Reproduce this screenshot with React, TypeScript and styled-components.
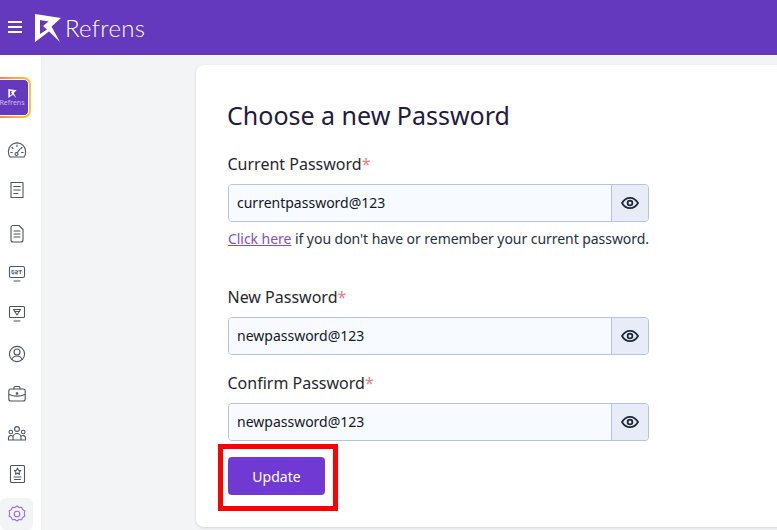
import React from 'react'
import styled, { createGlobalStyle } from 'styled-components'

const GlobalStyle = createGlobalStyle`
  html, body {
    margin: 0;
    height: 100%;
    overflow: hidden;
    font-family: "Noto Sans", "Open Sans", sans-serif;
    background: #f3f4f6;
  }
`

const Svg = ({ children }: { children: React.ReactNode }) => (
  <svg width="20" height="20" viewBox="0 0 20 20" fill="none" stroke="currentColor" strokeWidth="1.1" strokeLinecap="round" strokeLinejoin="round">
    {children}
  </svg>
)

const navItems: { icon: React.ReactNode; gap: number; active?: boolean }[] = [
  {
    gap: 20,
    icon: (
      <Svg>
        <path d="M3 17h14c1-1 1.600-3 1.600-5.500A8.600 8.600 0 0 0 1.400 11.500C1.400 14 2 16 3 17z" />
        <path d="M10 5v1.500M5 7.500l1 1M15 7.500l-1 1M3.800 12.500h1.500M14.700 12.500h1.500M10 13l3-4" />
        <circle cx="9.500" cy="14" r="1.500" />
      </Svg>
    ),
  },
  {
    gap: 24,
    icon: (
      <Svg>
        <path d="M4 2.500h12v15H4z" strokeDasharray="11 1" />
        <path d="M6.800 6.500h6.400M6.800 10h6.400M6.800 13.500h4" />
      </Svg>
    ),
  },
  {
    gap: 20,
    icon: (
      <Svg>
        <path d="M6 1.500h6l4 4V16a2 2 0 0 1-2 2H6a2 2 0 0 1-2-2V3.500a2 2 0 0 1 2-2z" />
        <path d="M7 7h6M7 10h6M7 13h6" />
      </Svg>
    ),
  },
  {
    gap: 20,
    icon: (
      <Svg>
        <rect x="2.500" y="2.500" width="15" height="11" rx="1.500" />
        <path d="M7 17h6" />
        <path d="M5 6.800H7M5 6.800v3H7V8.300M8.600 6.800h2v1.500h-2v1.500h2M11.800 6.800h3M13.300 6.800v3" strokeWidth="0.900" />
      </Svg>
    ),
  },
  {
    gap: 20,
    icon: (
      <Svg>
        <rect x="2.500" y="2.500" width="15" height="11" rx="1" />
        <path d="M6.500 5.500h7L10 11z" />
        <path d="M7.500 7.500h5M7 17h6" />
      </Svg>
    ),
  },
  {
    gap: 20,
    icon: (
      <Svg>
        <circle cx="10" cy="10" r="7.600" />
        <circle cx="10" cy="8" r="3" />
        <path d="M4.800 15.500c1-2.500 3-3.500 5.200-3.500s4.200 1 5.200 3.500" />
      </Svg>
    ),
  },
  {
    gap: 20,
    icon: (
      <Svg>
        <rect x="1.800" y="5" width="16.400" height="12" rx="2" />
        <path d="M7 5V3.500A1 1 0 0 1 8 2.500h4a1 1 0 0 1 1 1V5M2 10.500c5 2 11 2 16 0" />
        <circle cx="10" cy="9.500" r=".8" fill="currentColor" />
      </Svg>
    ),
  },
  {
    gap: 20,
    icon: (
      <Svg>
        <circle cx="10" cy="5" r="2.400" />
        <circle cx="3.800" cy="8" r="1.800" />
        <circle cx="16.200" cy="8" r="1.800" />
        <path d="M6 16v-2.500a4 4 0 0 1 8 0V16M1.500 16v-2a2.500 2.500 0 0 1 4.500-1.500M18.500 16v-2a2.500 2.500 0 0 0-4.500-1.500M1.500 16h17" />
      </Svg>
    ),
  },
  {
    gap: 20,
    icon: (
      <Svg>
        <rect x="3.500" y="1.500" width="14" height="17" rx="1" />
        <path d="M10.500 4.300l1 2 2.200.3-1.600 1.500.4 2.200-2-1-2 1 .4-2.200-1.600-1.500 2.200-.3zM7 13h7M7.500 15.500h6" />
      </Svg>
    ),
  },
  {
    gap: 20,
    active: true,
    icon: (
      <Svg>
        <path d="M10 1.800l2 1.700 2.600-.3 1 2.400 2.300 1.300-.6 2.600.6 2.600-2.300 1.300-1 2.400-2.600-.3-2 1.700-2-1.700-2.600.3-1-2.400-2.300-1.300.6-2.600-.6-2.600 2.300-1.300 1-2.400 2.600.3z" />
        <circle cx="10" cy="10" r="2.800" />
      </Svg>
    ),
  },
]

const EyeIcon = () => (
  <svg width="18" height="18" viewBox="0 0 18 18" fill="none" stroke="#1f2937" strokeWidth="1.800">
    <path d="M1 9c2-3.500 4.800-5.200 8-5.200s6 1.700 8 5.200c-2 3.500-4.800 5.200-8 5.200S3 12.500 1 9z" />
    <circle cx="9" cy="9" r="2.400" />
  </svg>
)

const LogoMark = ({ size }: { size: number }) => (
  <svg width={size} height={size} viewBox="0 0 26 28" fill="#fff">
    <path d="M0 0l26 4-9.500 8.500L25 28 12 15.500 8 12l5.500-4.500L5 6v14l7-4.500 2 2L0 28z" />
  </svg>
)

const PasswordField = ({ label, value }: { label: string; value: string }) => (
  <Field>
    <FieldLabel>
      {label}
      <Required>*</Required>
    </FieldLabel>
    <InputGroup>
      <TextInput readOnly value={value} />
      <EyeButton type="button">
        <EyeIcon />
      </EyeButton>
    </InputGroup>
  </Field>
)

const App = () => {
  return (
    <>
      <GlobalStyle />
      <Page>
        <TopBar>
          <MenuButton>
            <span />
            <span />
            <span />
          </MenuButton>
          <LogoMark size={28} />
          <Wordmark>Refrens</Wordmark>
        </TopBar>
        <Body>
          <SideNav>
            <BrandBadge>
              <BrandInner>
                <LogoMark size={9} />
                <BrandName>Refrens</BrandName>
              </BrandInner>
            </BrandBadge>
            {navItems.map((item, i) => (
              <NavItem key={i} $gap={item.gap} $active={item.active}>
                {item.icon}
              </NavItem>
            ))}
          </SideNav>
          <Content>
            <Card>
              <Title>Choose a new Password</Title>
              <PasswordField label="Current Password" value="currentpassword@123" />
              <HelpText>
                <HelpLink href="#">Click here</HelpLink> if you don't have or remember your current password.
              </HelpText>
              <PasswordField label="New Password" value="newpassword@123" />
              <PasswordField label="Confirm Password" value="newpassword@123" />
              <UpdateWrap>
                <UpdateButton type="button">Update</UpdateButton>
                <Highlight />
              </UpdateWrap>
            </Card>
          </Content>
        </Body>
      </Page>
    </>
  )
}

export default App

const Page = styled.div`
  width: 777px;
  height: 530px;
  display: flex;
  flex-direction: column;
  overflow: hidden;
`

const TopBar = styled.header`
  height: 55px;
  flex: none;
  background: #6439bd;
  display: flex;
  align-items: center;
  padding: 0 0 0 8px;
  color: #fff;
`

const MenuButton = styled.div`
  width: 14px;
  margin-right: 12px;
  margin-top: -1px;
  display: flex;
  flex-direction: column;
  gap: 3px;

  span {
    height: 2px;
    background: #fff;
  }
`

const Wordmark = styled.span`
  font-family: Lato, sans-serif;
  font-weight: 300;
  font-size: 24px;
  letter-spacing: 0.3px;
  margin-left: 3px;
  line-height: 1;
`

const Body = styled.div`
  flex: 1;
  display: flex;
  min-height: 0;
`

const SideNav = styled.nav`
  width: 42px;
  flex: none;
  background: #fff;
  border-right: 1px solid #eceef1;
  box-sizing: border-box;
  display: flex;
  flex-direction: column;
  align-items: flex-start;
  padding-top: 22px;
`

const BrandBadge = styled.div`
  width: 43px;
  height: 41px;
  margin-left: -12px;
  margin-bottom: 22px;
  flex: none;
  box-sizing: border-box;
  padding: 2px;
  border-radius: 7px;
  background: linear-gradient(90deg, #f76d6d, #ffc531);
`

const BrandInner = styled.div`
  height: 100%;
  box-sizing: border-box;
  border: 1px solid #fff;
  border-radius: 5px;
  background: #6439bd;
  display: flex;
  flex-direction: column;
  align-items: center;
  justify-content: center;
  padding-left: 5px;
  gap: 1px;
`

const BrandName = styled.span`
  font-size: 7px;
  line-height: 8px;
  color: #c9bce8;
`

const NavItem = styled.div<{ $gap: number; $active?: boolean }>`
  width: 33px;
  height: 20px;
  flex: none;
  margin-bottom: ${(p) => p.$gap}px;
  padding-left: 1px;
  box-sizing: border-box;
  display: flex;
  align-items: center;
  justify-content: center;
  color: ${(p) => (p.$active ? '#9a6cf5' : '#4b5563')};
  border-radius: 6px;
  background: ${(p) => (p.$active ? '#f3f4f6' : 'transparent')};
  box-shadow: ${(p) => (p.$active ? '0 0 0 6px #f3f4f6' : 'none')};
  clip-path: ${(p) => (p.$active ? 'inset(-6px 0 -6px 0 round 6px)' : 'none')};
`

const Content = styled.main`
  flex: 1;
  min-width: 0;
  padding: 10px 0 0 154px;
`

const Card = styled.section`
  width: 640px;
  height: 462px;
  box-sizing: border-box;
  background: #fff;
  border-radius: 8px;
  box-shadow: 0 1px 3px rgba(0, 0, 0, 0.12);
  padding: 32px;
`

const Title = styled.h1`
  margin: 0 0 18px -1px;
  font-size: 25px;
  line-height: 37px;
  padding-bottom: 1px;
  font-weight: 400;
  color: #1f1b3d;
`

const Field = styled.div`
  width: 421px;
  margin-bottom: 17px;
`

const FieldLabel = styled.label`
  display: block;
  font-size: 16px;
  line-height: 22px;
  color: #27272f;
  margin: 0 0 9px -0.5px;
`

const Required = styled.span`
  color: #f27a85;
`

const InputGroup = styled.div`
  display: flex;
  height: 38px;
  box-sizing: border-box;
  border: 1px solid #b6c3dc;
  border-radius: 4px;
  overflow: hidden;
`

const TextInput = styled.input`
  flex: 1;
  min-width: 0;
  border: 0;
  outline: 0;
  padding: 0 8px 2px;
  background: #f7faff;
  font-family: inherit;
  font-size: 14px;
  color: #111827;
`

const EyeButton = styled.button`
  width: 37px;
  flex: none;
  border: 0;
  border-left: 1px solid #b6c3dc;
  background: #e7ecf7;
  padding: 0;
  display: flex;
  align-items: center;
  justify-content: center;
`

const HelpText = styled.p`
  margin: -9px 0 37px;
  width: 440px;
  font-size: 14px;
  line-height: 18px;
  padding-bottom: 1px;
  letter-spacing: -0.05px;
  color: #27303f;
  white-space: nowrap;
`

const HelpLink = styled.a`
  color: #7c4fd6;
`

const UpdateWrap = styled.div`
  position: relative;
  width: 97px;
  margin-top: -1px;
`

const UpdateButton = styled.button`
  width: 97px;
  height: 38px;
  border: 0;
  border-radius: 4px;
  background: #7039d3;
  color: #fff;
  font-family: inherit;
  font-size: 14px;
  padding: 0;
`

const Highlight = styled.div`
  position: absolute;
  left: -10px;
  top: -13px;
  width: 120px;
  height: 67px;
  box-sizing: border-box;
  border: 5px solid #f00;
`
